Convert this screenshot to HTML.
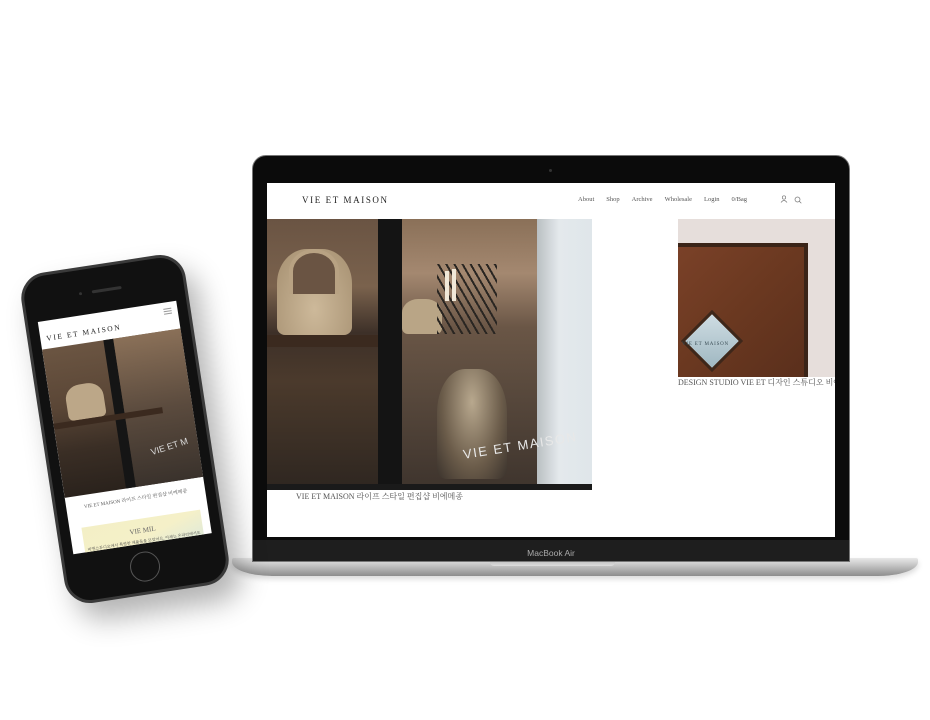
<!DOCTYPE html>
<html><head><meta charset="utf-8">
<style>
*{margin:0;padding:0;box-sizing:border-box}
body{width:930px;height:720px;background:#fff;position:relative;overflow:hidden;font-family:"Liberation Serif","Noto Serif CJK SC",serif}
.a{position:absolute}
</style></head><body>

<!-- laptop base -->
<div class="a" style="left:232px;top:558px;width:686px;height:18px;border-radius:2px 2px 40px 40px/2px 2px 14px 14px;background:linear-gradient(#e8e8e8 0,#cfcfcf 30%,#a9a9a9 70%,#8d8d8d 100%);box-shadow:0 3px 6px rgba(0,0,0,.15)"></div>
<div class="a" style="left:490px;top:560px;width:125px;height:6px;background:linear-gradient(#bdbdbd,#dcdcdc);border-radius:0 0 4px 4px"></div>
<!-- laptop lid -->
<div class="a" style="left:252px;top:155px;width:598px;height:407px;background:#0b0b0b;border-radius:14px 14px 0 0;border:1px solid #777"></div>
<div class="a" style="left:253px;top:540px;width:596px;height:21px;background:#1e1e1e"></div>
<div class="a" style="left:253px;top:548px;width:596px;font-family:'Liberation Sans',sans-serif;font-size:8.5px;color:#aaa;text-align:center">MacBook Air</div>
<div class="a" style="left:549px;top:169px;width:3px;height:3px;border-radius:50%;background:#333"></div>
<!-- screen -->
<div class="a" style="left:267px;top:183px;width:568px;height:354px;background:#fff;overflow:hidden">
  <div class="a" style="left:35px;top:12px;font-size:9px;letter-spacing:1.6px;color:#222">VIE ET MAISON</div>
  <div class="a" style="left:311px;top:13px;font-size:6.5px;color:#555;white-space:nowrap">
    <span style="margin-right:12px">About</span><span style="margin-right:12px">Shop</span><span style="margin-right:12px">Archive</span><span style="margin-right:12px">Wholesale</span><span style="margin-right:12px">Login</span><span>0/Bag</span>
  </div>
  <svg class="a" style="left:513px;top:12px" width="8" height="8" viewBox="0 0 8 8"><circle cx="4" cy="2.5" r="1.7" fill="none" stroke="#777" stroke-width=".7"/><path d="M1 7.5Q4 3.5 7 7.5" fill="none" stroke="#777" stroke-width=".7"/></svg>
  <svg class="a" style="left:527px;top:13px" width="8" height="8" viewBox="0 0 8 8"><circle cx="3.5" cy="3.5" r="2.5" fill="none" stroke="#777" stroke-width=".7"/><path d="M5.3 5.3L7.3 7.3" stroke="#777" stroke-width=".7"/></svg>

  <!-- main photo -->
  <div class="a" style="left:0;top:36px;width:325px;height:271px;overflow:hidden;background:linear-gradient(180deg,#5a4535 0%,#6e5642 30%,#4a3a2c 45%,#3a2e25 70%,#2a231e 100%)">
    <div class="a" style="left:0;top:0;width:111px;height:271px;background:linear-gradient(180deg,#6a5443 0%,#7a624d 25%,#3d3028 42%,#4b3a2c 60%,#2e2620 100%)"></div>
    <div class="a" style="left:0;top:116px;width:245px;height:12px;background:#3b2a1f"></div>
    <div class="a" style="left:10px;top:30px;width:75px;height:86px;border-radius:40% 40% 8px 8px;background:radial-gradient(ellipse at 50% 70%,#cdb99a,#a58f70);"></div>
    <div class="a" style="left:22px;top:30px;width:50px;height:45px;border:4px solid #b8a283;border-bottom:none;border-radius:50% 50% 0 0;background:#6a5443"></div>
    <div class="a" style="left:111px;top:0;width:24px;height:271px;background:#141414"></div>
    <div class="a" style="left:135px;top:0;width:140px;height:271px;background:linear-gradient(180deg,#8a7058 0%,#a48870 20%,#6a5646 40%,#5b4b3e 60%,#3e342d 100%)"></div>
    <div class="a" style="left:135px;top:80px;width:40px;height:35px;border-radius:40% 40% 6px 6px;background:#b9a586"></div>
    <div class="a" style="left:170px;top:45px;width:60px;height:70px;background:repeating-linear-gradient(60deg,#2a2622 0 2px,transparent 2px 7px)"></div>
    <div class="a" style="left:178px;top:52px;width:4px;height:30px;background:#f0e8d8"></div>
    <div class="a" style="left:185px;top:50px;width:4px;height:32px;background:#f0e8d8"></div>
    <div class="a" style="left:170px;top:150px;width:70px;height:110px;border-radius:40% 40% 10px 10px;background:radial-gradient(ellipse at 50% 30%,#b8a88e,#6b5c4a 60%,#3a322c)"></div>
    <div class="a" style="left:270px;top:0;width:55px;height:265px;background:linear-gradient(90deg,#b9bfc2,#e4e9ec 40%,#dfe6ea)"></div>
    <div class="a" style="left:0;top:265px;width:325px;height:6px;background:#1a1a1a"></div>
    <div class="a" style="left:195px;top:228px;font-family:'Liberation Sans',sans-serif;font-size:13px;color:#e8e8e8;letter-spacing:1.5px;transform:rotate(-9deg);transform-origin:left top;white-space:nowrap">VIE ET MAISON</div>
  </div>
  <div class="a" style="left:29px;top:308px;font-size:8px;color:#555;white-space:nowrap">VIE ET MAISON 라이프 스타일 편집샵 비에메종</div>

  <!-- right photo -->
  <div class="a" style="left:411px;top:36px;width:157px;height:158px;overflow:hidden;background:#e6dedb">
    <div class="a" style="left:0;top:24px;width:130px;height:134px;background:linear-gradient(135deg,#7a4128,#6a3820 50%,#5a2f1c);border-top:4px solid #3a2418;border-right:4px solid #3a2418"></div>
    <div class="a" style="left:12px;top:100px;width:44px;height:44px;transform:rotate(45deg);background:linear-gradient(135deg,#cfdde3,#9fb7c1);border:3px solid #3e271a"></div>
    <div class="a" style="left:4px;top:123px;font-size:5px;color:#3a4d55;letter-spacing:.8px;white-space:nowrap">VIE ET MAISON</div>
  </div>
  <div class="a" style="left:411px;top:194px;font-size:8px;color:#555;white-space:nowrap">DESIGN STUDIO VIE ET 디자인 스튜디오 비에</div>
</div>

<!-- phone -->
<div class="a" style="left:42px;top:262px;width:166px;height:334px;transform:rotate(-8.7deg);border-radius:26px;background:#111;border:3px solid #3a3a3a;overflow:hidden;box-shadow:10px 18px 28px rgba(0,0,0,.3)">
  <div class="a" style="left:68px;top:22px;width:30px;height:3px;border-radius:2px;background:#333"></div>
  <div class="a" style="left:55px;top:22px;width:3px;height:3px;border-radius:50%;background:#333"></div>
  <div class="a" style="left:64px;top:288px;width:30px;height:30px;border-radius:50%;border:1.5px solid #555"></div>
  <div class="a" style="left:10px;top:45px;width:140px;height:235px;background:#fff;overflow:hidden">
    <div class="a" style="left:6px;top:13px;font-size:7.5px;letter-spacing:1.6px;color:#222;white-space:nowrap">VIE ET MAISON</div>
    <div class="a" style="left:126px;top:6px;width:8px;height:1px;background:#999;box-shadow:0 2.5px #999,0 5px #999"></div>
    <div class="a" style="left:0;top:28px;width:140px;height:150px;background:linear-gradient(180deg,#6b5542,#5a4636 40%,#3a2e25 70%,#2a221c)">
      <div class="a" style="left:62px;top:0;width:10px;height:150px;background:#151515"></div>
      <div class="a" style="left:72px;top:0;width:68px;height:150px;background:linear-gradient(180deg,#8a7058,#5b4b3e 50%,#3a322c)"></div>
      <div class="a" style="left:16px;top:40px;width:38px;height:35px;border-radius:40% 40% 5px 5px;background:#bca788"></div>
      <div class="a" style="left:0;top:75px;width:110px;height:6px;background:#3b2a1f"></div>
      <div class="a" style="left:92px;top:110px;font-family:'Liberation Sans',sans-serif;font-size:9px;color:#ddd;transform:rotate(-9deg);white-space:nowrap">VIE ET M</div>
    </div>
    <div class="a" style="left:0;top:186px;width:140px;text-align:center;font-size:5px;color:#555;white-space:nowrap">VIE ET MAISON 라이프 스타일 편집샵 비에메종</div>
    <div class="a" style="left:12px;top:210px;width:120px;height:60px;background:linear-gradient(160deg,#f3efc6,#f5f0c8 40%,#c9e4ec)">
      <div class="a" style="left:0;top:8px;width:120px;text-align:center;font-size:7px;color:#666">VIE MIL</div>
      <div class="a" style="left:2px;top:20px;width:116px;text-align:center;font-size:4px;color:#444;line-height:6px">비엔스튜디오에서 특별한 제품들을 모았어요. 이제는 온라인에서도 만나실 수 있습니다.</div>
    </div>
  </div>
</div>
</body></html>
